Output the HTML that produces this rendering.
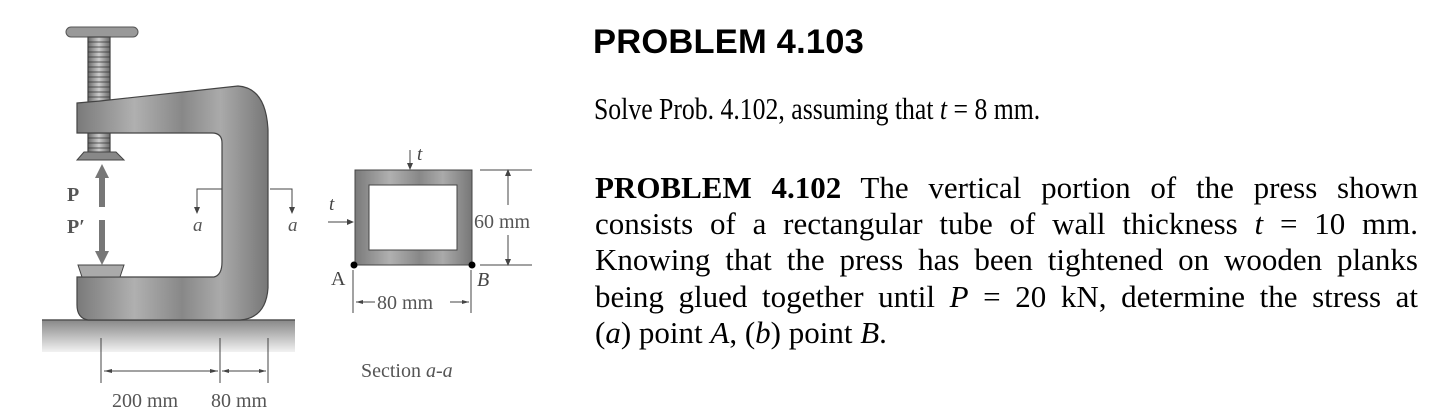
<!DOCTYPE html>
<html><head><meta charset="utf-8"><style>
html,body{margin:0;padding:0;background:#fff;}
body{width:1448px;height:419px;position:relative;overflow:hidden;}
.t{position:absolute;font-family:"Liberation Serif",serif;color:#000;white-space:nowrap;}
h1{position:absolute;left:593px;top:22px;margin:0;font-family:"Liberation Sans",sans-serif;font-weight:bold;font-size:34.5px;line-height:40px;letter-spacing:0.2px;}
#p{position:absolute;left:595px;top:170px;width:823px;font-family:"Liberation Serif",serif;font-size:31px;line-height:36.2px;}
#p div{text-align:justify;text-align-last:justify;height:36.2px;white-space:normal;}
#p div.l{text-align-last:left;}
</style></head><body>
<h1>PROBLEM 4.103</h1>
<div class="t" style="left:594px;top:93px;font-size:31px;line-height:32px;transform:scaleX(0.83);transform-origin:0 0;">Solve Prob. 4.102, assuming that <i>t</i> = 8 mm.</div>
<div id="p">
<div><b>PROBLEM 4.102</b> The vertical portion of the press shown</div>
<div>consists of a rectangular tube of wall thickness <i>t</i> = 10 mm.</div>
<div>Knowing that the press has been tightened on wooden planks</div>
<div>being glued together until <i>P</i> = 20 kN, determine the stress at</div>
<div class="l">(<i>a</i>) point <i>A</i>, (<i>b</i>) point <i>B</i>.</div>
</div>

<svg width="545" height="419" style="position:absolute;left:0;top:0" xmlns="http://www.w3.org/2000/svg" font-family="Liberation Serif, serif">
<defs>
<linearGradient id="g" x1="0" x2="1"><stop offset="0" stop-color="#7a7a7a"/><stop offset=".3" stop-color="#b0b0b0"/><stop offset=".55" stop-color="#888"/><stop offset=".75" stop-color="#aaa"/><stop offset="1" stop-color="#777"/></linearGradient>
<linearGradient id="gr" x1="0" y1="0" x2="0" y2="1"><stop offset="0" stop-color="#888"/><stop offset="1" stop-color="#f2f2f2"/></linearGradient>
<linearGradient id="s" x1="0" x2="1"><stop offset="0" stop-color="#6a6a6a"/><stop offset=".5" stop-color="#ccc"/><stop offset="1" stop-color="#6a6a6a"/></linearGradient>
</defs>
<rect x="42" y="320" width="253" height="32" fill="url(#gr)"/>
<line x1="42" y1="320" x2="295" y2="320" stroke="#555" stroke-width="1.5"/>
<rect x="66" y="27" width="72" height="10" rx="5" fill="#999" stroke="#555"/>
<g stroke="#444" stroke-width="1.2">
<rect x="88" y="37" width="22" height="66" fill="url(#s)"/>
<rect x="88" y="133" width="22" height="20" fill="url(#s)"/>
</g>
<g stroke="#333" stroke-width="0.8" fill="none">
<path d="M88 42h22M88 47h22M88 52h22M88 57h22M88 62h22M88 67h22M88 72h22M88 77h22M88 82h22M88 87h22M88 92h22M88 97h22M88 138h22M88 143h22M88 148h22"/>
</g>
<path d="M77 103 L100 101 L238 86 Q266 88 268 130 L268 288 Q266 318 240 320 L88 320 Q77 318 77 305 L77 277 L214 277 Q222 275 222 262 L222 143 Q222 133 212 133 L77 133 Z" fill="url(#g)" stroke="#444" stroke-width="1.2"/>
<path d="M84 152 L116 152 L124 160 L77 160 Z" fill="#888" stroke="#444"/>
<path d="M78 265 L124 265 L120 277 L82 277 Z" fill="#aaa" stroke="#444"/>
<g fill="#777">
<path d="M102 164 L109 178 L105 178 L105 207 L99 207 L99 178 L95 178 Z"/>
<path d="M102 265 L109 251 L105 251 L105 220 L99 220 L99 251 L95 251 Z"/>
</g>
<text x="67" y="201" font-size="20" font-weight="bold" fill="#555">P</text>
<text x="67" y="233" font-size="20" font-weight="bold" fill="#555">P′</text>
<g stroke="#444" fill="none" stroke-width="1">
<path d="M222 189H197V210M270 189H292V210"/>
<path d="M101 338V383M220 338V383M268 338V383M104 371H218M222 371H266"/>
<path d="M410 150V168M410 205V188M328 222H352M397 222H372M480 170H532M480 265H532M508 172V205M508 235V263M353 270V313M471 270V313M356 302H375M450 302H469"/>
</g>
<g fill="#444">
<path d="M194 207h6l-3 7z M289 207h6l-3 7z"/>
<path d="M104 371l8-2v4z M218 371l-8-2v4z M222 371l7-2v4z M266 371l-7-2v4z"/>
<path d="M407 163h6l-3 7z M407 192h6l-3-7z M347 219v6l7-3z M372 219v6l7-3z M505 176h6l-3-7z M505 259h6l-3 7z M356 302l7-2v4z M469 302l-7-2v4z"/>
</g>
<text x="193" y="231" font-size="19" font-style="italic" fill="#555">a</text>
<text x="288" y="231" font-size="19" font-style="italic" fill="#555">a</text>
<rect x="355" y="170" width="117" height="95" fill="url(#g)" stroke="#444"/>
<rect x="369" y="185" width="88" height="65" fill="#fff" stroke="#444"/>
<circle cx="354" cy="265" r="3.5" fill="#000"/><circle cx="472" cy="265" r="3.5" fill="#000"/>
<text x="417" y="160" font-size="19" font-style="italic" fill="#444">t</text>
<text x="329" y="210" font-size="19" font-style="italic" fill="#444">t</text>
<text x="331" y="285" font-size="20" fill="#444">A</text>
<text x="477" y="286" font-size="20" font-style="italic" fill="#444">B</text>
<text x="474" y="228" font-size="20" fill="#555">60 mm</text>
<text x="377" y="309" font-size="20" fill="#555">80 mm</text>
<text x="361" y="377" font-size="20" fill="#555">Section <tspan font-style="italic">a</tspan>-<tspan font-style="italic">a</tspan></text>
<text x="112" y="407" font-size="20" fill="#555">200 mm</text>
<text x="211" y="407" font-size="20" fill="#555">80 mm</text>
</svg>
</body></html>
